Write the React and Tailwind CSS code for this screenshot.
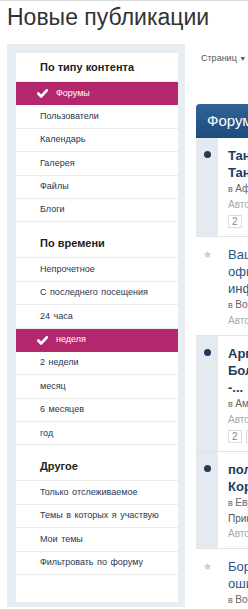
import React from "react";

const Check = () => (
  <svg width="11" height="9" viewBox="0 0 11 9" className="shrink-0">
    <path d="M1.3 4.6 L4.2 7.4 L9.8 1.4" fill="none" stroke="#fff" strokeWidth="2.8" strokeLinecap="round" strokeLinejoin="round" />
  </svg>
);

function Row({ label, active }) {
  if (active) {
    return (
      <div className="h-[23.4px] flex items-center bg-[#b3286c] text-white pl-[21px]">
        <Check />
        <span className="ml-[8px]">{label}</span>
      </div>
    );
  }
  return (
    <div className="h-[23.4px] flex items-center border-b border-[#ececec] pl-[24px] text-[#1f3650]">
      {label}
    </div>
  );
}

function Section({ title, items, first }) {
  return (
    <div className={first ? "" : "mt-[7px]"}>
      <div className="h-[29px] flex items-end pb-[6px] pl-[24px] border-b border-[#ececec] text-[11px] font-bold text-[#222] [word-spacing:0px]">
        {title}
      </div>
      {items.map((it) => (
        <Row key={it.label} label={it.label} active={it.active} />
      ))}
    </div>
  );
}

const Dot = () => <div className="w-[7px] h-[7px] rounded-full bg-[#1d3a5c]" />;
const Star = () => (
  <svg width="9" height="9" viewBox="0 0 24 24">
    <path d="M12 2l3.1 6.6 7.2.9-5.3 5 1.4 7.1L12 18.1 5.6 21.6 7 14.5 1.7 9.5l7.2-.9z" fill="#cfcfcf" />
  </svg>
);

function Topic({ unread, title, bold, forum, extra, pages }) {
  return (
    <div className="flex border-b border-[#e2e2e2] bg-white">
      <div className={"w-[22px] shrink-0 flex justify-center pt-[13px] " + (unread ? "bg-[#e4eaf0]" : "bg-white")}>
        {unread ? <Dot /> : <Star />}
      </div>
      <div className="ml-[1px] pl-[9px] pt-[9px] pb-[7px] bg-white flex-1">
        {title.map((t, i) => (
          <div
            key={i}
            className={"whitespace-nowrap text-[13px] leading-[17px] " + (bold ? "font-bold text-[#1e3b5c]" : "text-[#27558a]")}
          >
            {t}
          </div>
        ))}
        <div className="whitespace-nowrap text-[10px] leading-[15px] text-[#666]">
          <span className="text-[9px]">в </span>
          {forum}
        </div>
        {extra && <div className="whitespace-nowrap text-[10px] leading-[15px] text-[#555]">{extra}</div>}
        <div className="whitespace-nowrap text-[10px] leading-[15px] text-[#aaa]">Автор: Администратор, 12 Ноя 2013</div>
        {pages && (
          <div className="flex gap-[4px] mt-[3px] pb-[1px]">
            {pages.map((p) => (
              <div key={p} className="h-[13px] px-[3px] border border-[#ddd] text-[10px] leading-[11px] text-[#888]">
                {p}
              </div>
            ))}
          </div>
        )}
      </div>
    </div>
  );
}

export default function App() {
  return (
    <div className="w-[248px] h-[609px] overflow-hidden bg-white border-t border-[#dcdcdc] font-['Liberation_Sans',Arial,sans-serif] text-[9px] [word-spacing:1px]">
      <h1 className="h-[43px] pl-[7px] pt-[1px] text-[23px] leading-[30px] text-[#333] font-normal whitespace-nowrap [word-spacing:0px]">
        Новые публикации
      </h1>
      <div className="flex items-start">
        <aside className="ml-[7px] w-[178px] shrink-0 bg-[#e8edf1] pl-[9px] pr-[7px] pt-[9px] pb-[5px]">
          <div className="bg-white pb-[27px]">
            <Section
              first
              title="По типу контента"
              items={[
                { label: "Форумы", active: true },
                { label: "Пользователи" },
                { label: "Календарь" },
                { label: "Галерея" },
                { label: "Файлы" },
                { label: "Блоги" },
              ]}
            />
            <Section
              title="По времени"
              items={[
                { label: "Непрочетное" },
                { label: "С последнего посещения" },
                { label: "24 часа" },
                { label: "неделя", active: true },
                { label: "2 недели" },
                { label: "месяц" },
                { label: "6 месяцев" },
                { label: "год" },
              ]}
            />
            <Section
              title="Другое"
              items={[
                { label: "Только отслеживаемое" },
                { label: "Темы в которых я участвую" },
                { label: "Мои темы" },
                { label: "Фильтровать по форуму" },
              ]}
            />
          </div>
        </aside>
        <main className="ml-[11px] w-[500px] shrink-0 [word-spacing:0px]">
          <div className="h-[60px] pl-[5px] pt-[8px] text-[9px] text-[#555] leading-[12px] whitespace-nowrap">
            Страниц <span className="text-[7px]">▼</span>
          </div>
          <div className="h-[34px] rounded-tl-[4px] bg-gradient-to-b from-[#2f6396] to-[#1e4c7c] pl-[11px] flex items-center text-white text-[15px]">
            Форумы
          </div>
          <Topic unread bold title={["Танзания: сафари", "Танганьика"]} forum="Африка" pages={["2"]} />
          <Topic title={["Ваша поездка", "официальная", "информация"]} forum="Вопросы" />
          <Topic unread bold title={["Аргентина:", "Большое путешествие", "-..."]} forum="Америка" pages={["2", "3"]} />
          <Topic unread bold title={["полезное", "Корсика"]} forum="Европа" extra="Прикреплено" />
          <Topic title={["Борьба с", "ошибками"]} forum="Вопросы" />
        </main>
      </div>
    </div>
  );
}
